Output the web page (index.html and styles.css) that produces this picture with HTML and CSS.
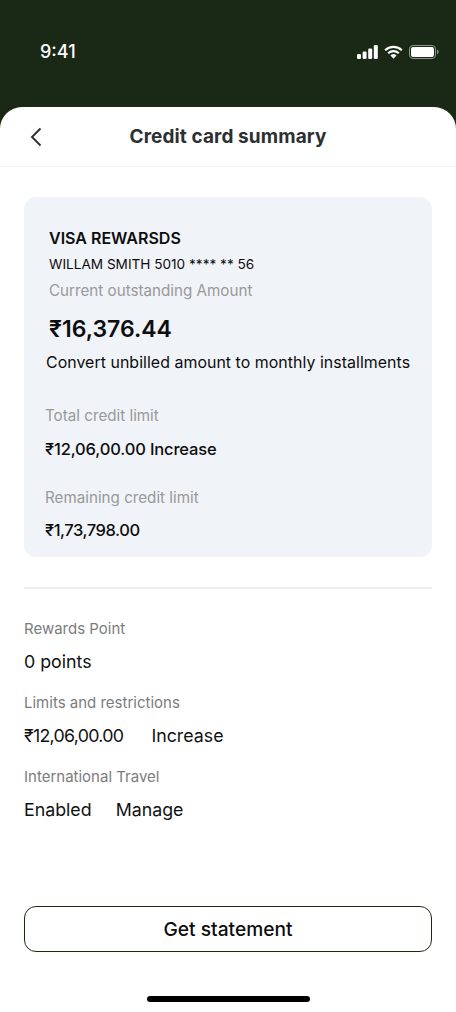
FILE: index.html
```html
<!DOCTYPE html>
<html lang="en">
<head>
<meta charset="utf-8">
<title>Credit card summary</title>
<link rel="stylesheet" href="styles.css">
</head>
<body>
<div class="screen">
  <div class="status">
    <span class="time">9:41</span>
    <div class="status-icons">
      <svg class="ic-signal" viewBox="0 0 21 14" width="21" height="14"><rect x="0" y="9" width="4" height="5" rx="1.2" fill="#fff"/><rect x="5.6" y="6.5" width="4" height="7.5" rx="1.2" fill="#fff"/><rect x="11.2" y="3.5" width="4" height="10.5" rx="1.2" fill="#fff"/><rect x="16.8" y="0" width="4" height="14" rx="1.2" fill="#fff"/></svg>
      <svg class="ic-wifi" viewBox="0 0 20 14" width="19" height="14"><path d="M1.2 5.2a12.6 12.6 0 0 1 17.6 0" fill="none" stroke="#fff" stroke-width="2.2"/><path d="M4.4 8.4a8 8 0 0 1 11.2 0" fill="none" stroke="#fff" stroke-width="2.2"/><path d="M10 14l-3.2-3.3a4.6 4.6 0 0 1 6.4 0z" fill="#fff"/></svg>
      <svg class="ic-batt" viewBox="0 0 30 14" width="30" height="14"><rect x=".5" y=".5" width="26" height="13" rx="3.5" fill="none" stroke="#8e948c"/><rect x="2" y="2" width="23" height="10" rx="2.2" fill="#fff"/><path d="M28 4.8c1 .3 1.6 1.2 1.6 2.2s-.6 1.9-1.6 2.2z" fill="#8e948c"/></svg>
    </div>
  </div>
  <main class="sheet">
    <header class="topbar">
      <svg class="back" viewBox="0 0 12 20" width="12" height="20"><path d="M10.5 1.5L2 10l8.5 8.5" fill="none" stroke="#2c3032" stroke-width="1.9"/></svg>
      <h1 class="title">Credit card summary</h1>
    </header>
    <div class="content">
      <section class="card">
        <div class="card-head">
          <div class="card-name">VISA REWARSDS</div>
          <div class="card-num">WILLAM SMITH 5010 **** ** 56</div>
          <div class="card-label">Current outstanding Amount</div>
          <div class="card-amount">₹16,376.44</div>
        </div>
        <div class="card-note">Convert unbilled amount to monthly installments</div>
        <div class="card-label limit-label first">Total credit limit</div>
        <div class="limit-value">₹12,06,00.00 Increase</div>
        <div class="card-label limit-label second">Remaining credit limit</div>
        <div class="limit-value remaining">₹1,73,798.00</div>
      </section>
      <div class="divider"></div>
      <section class="details">
        <div class="d-label">Rewards Point</div>
        <div class="d-value">0 points</div>
        <div class="d-label">Limits and restrictions</div>
        <div class="d-value"><span class="limit-amt">₹12,06,00.00</span><span>Increase</span></div>
        <div class="d-label">International Travel</div>
        <div class="d-value"><span class="status-val">Enabled</span><span>Manage</span></div>
      </section>
      <button class="statement" type="button">Get statement</button>
    </div>
    <div class="home"></div>
  </main>
</div>
</body>
</html>
```

FILE: styles.css
```css
* { box-sizing: border-box; margin: 0; padding: 0; }
html, body { width: 456px; height: 1012px; overflow: hidden; background: #1a2915; }
body { font-family: Inter, "Open Sans", "Liberation Sans", sans-serif; color: #0d0d0d; }
.screen { width: 456px; height: 1012px; display: flex; flex-direction: column; }
.status { height: 107px; flex: none; display: flex; justify-content: space-between; align-items: flex-start; padding: 40px 17px 0 40px; }
.time { font-size: 18px; line-height: 24px; font-weight: 500; color: #fff; }
.status-icons { display: flex; align-items: center; gap: 6px; margin-top: 5px; }
.sheet { flex: 1; background: #fff; border-radius: 22px 22px 0 0; display: flex; flex-direction: column; }
.topbar { height: 60px; flex: none; border-bottom: 1px solid #f1f3f7; display: flex; align-items: center; justify-content: center; position: relative; }
.back { position: absolute; left: 30px; top: 20px; }
.title { font-size: 19px; line-height: 26px; font-weight: 700; color: #2c3032; letter-spacing: .1px; padding-top: 1px; }
.content { flex: 1; padding: 30px 24px 0; display: flex; flex-direction: column; }
.card { height: 360px; background: #f0f3f8; border-radius: 12px; padding-top: 28px; padding-left: 21px; }
.card-head { padding-left: 4px; }
.card-name { font-size: 16px; line-height: 26px; font-weight: 600; }
.card-num { font-size: 13.6px; line-height: 26px; font-weight: 400; }
.card-label { font-size: 15.2px; line-height: 26px; color: #98999b; padding-top: 1px; }
.card-amount { font-size: 23px; line-height: 30px; font-weight: 600; margin-top: 10px; }
.card-note { font-size: 15.9px; line-height: 24px; font-weight: 400; margin-top: 7px; margin-left: 1px; letter-spacing: .05px; }
.limit-label { line-height: 24px; }
.first { margin-top: 28px; }
.second { margin-top: 23px; }
.limit-value { font-size: 16.5px; line-height: 26px; font-weight: 500; margin-top: 8px; letter-spacing: -.15px; }
.remaining { letter-spacing: -.45px; margin-top: 7px; }
.divider { height: 2px; background: #eeeeef; margin-top: 30px; flex: none; }
.details { padding-top: 28px; }
.d-label { font-size: 15px; line-height: 24px; color: #7b7c7e; margin-top: 16px; }
.d-label:first-child { margin-top: 0; }
.d-value { font-size: 17.8px; line-height: 26px; margin-top: 8px; color: #111; display: flex; }
.limit-amt { margin-right: 28px; letter-spacing: -.7px; }
.status-val { margin-right: 24px; }
.statement { height: 46px; margin-top: 83px; flex: none; border: 1.5px solid #1a2915; border-radius: 12px; background: #fff; font-family: inherit; font-size: 19.2px; font-weight: 500; color: #0d0d0d; }
.home { width: 163px; height: 6px; background: #000; border-radius: 3px; margin: 0 auto 10px; flex: none; }
```
